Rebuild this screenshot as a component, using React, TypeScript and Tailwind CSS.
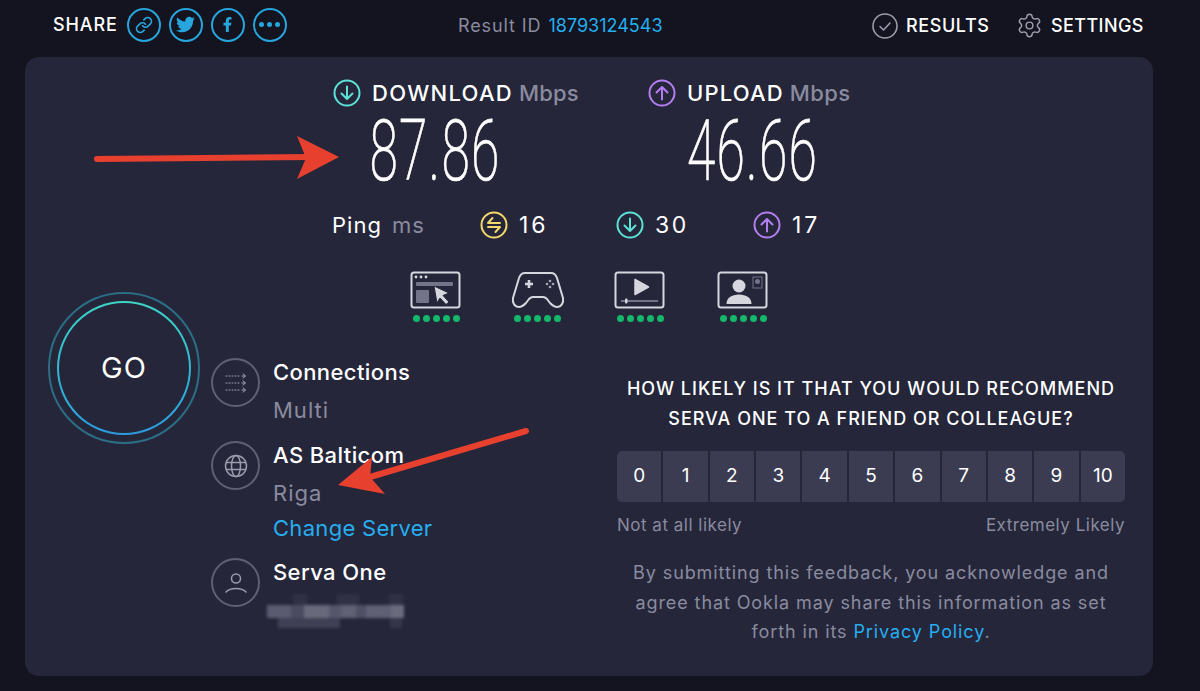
import React from 'react';
import { Link, Settings } from 'lucide-react';
import { FaTwitter, FaFacebookF } from 'react-icons/fa';

const scores = [0, 1, 2, 3, 4, 5, 6, 7, 8, 9, 10];

// pixelated block that hides the user's address
const redactTop = [
  { w: 24, c: 'bg-[#5a5b70]' },
  { w: 13, c: 'bg-[#4a4b60]' },
  { w: 25, c: 'bg-[#68697b]' },
  { w: 12, c: 'bg-[#55566a]' },
  { w: 15, c: 'bg-[#606175]' },
  { w: 10, c: 'bg-[#4f5065]' },
  { w: 25, c: 'bg-[#5f6074]' },
  { w: 13, c: 'bg-[#6a6b7d]' },
];

function ShareCircle({ children }: { children: React.ReactNode }) {
  return (
    <span className="w-[34px] h-[34px] rounded-full border-2 border-[#27a5dc] flex items-center justify-center text-[#27a5dc]">
      {children}
    </span>
  );
}

function ArrowBadge({ dir, color }: { dir: 'up' | 'down'; color: string }) {
  return (
    <svg width="28" height="28" viewBox="0 0 28 28" fill="none" stroke={color} strokeWidth="2" strokeLinecap="round" strokeLinejoin="round">
      <circle cx="14" cy="14" r="12.5" />
      {dir === 'down' ? <path d="M14 7.5v12.5M8.5 14.5l5.5 5.5 5.5-5.5" /> : <path d="M14 20.5V8M8.5 13.5L14 8l5.5 5.5" />}
    </svg>
  );
}

function PingBadge() {
  return (
    <svg width="28" height="28" viewBox="0 0 28 28" fill="none" stroke="#f3d86b" strokeWidth="2" strokeLinecap="round" strokeLinejoin="round">
      <circle cx="14" cy="14" r="12.5" />
      <path d="M20 12H8l4.500-5M8 16h12l-4.500 5" />
    </svg>
  );
}

function Dots() {
  return (
    <div className="flex gap-[3px] mt-[6px] justify-center">
      {[0, 1, 2, 3, 4].map((i) => (
        <span key={i} className="w-[7px] h-[7px] rounded-full bg-[#14b86a]" />
      ))}
    </div>
  );
}

function BrowseIcon() {
  return (
    <svg width="52" height="38" viewBox="0 0 52 38" fill="none">
      <rect x="1.5" y="1.5" width="48" height="35" rx="2.5" stroke="#d5d6de" strokeWidth="2" />
      <circle cx="6" cy="6" r="1.4" fill="#d5d6de" />
      <circle cx="11" cy="6" r="1.4" fill="#d5d6de" />
      <circle cx="16" cy="6" r="1.4" fill="#d5d6de" />
      <rect x="6" y="11" width="37" height="4" rx="1" fill="#73748a" />
      <rect x="6" y="19" width="13" height="13" rx="1" fill="#73748a" />
      <path d="M24 15l15 7-6 2.5 6 6.5-3 2.5-6-6.5-3 5z" fill="#d5d6de" stroke="#25263a" strokeWidth="1" />
    </svg>
  );
}

function GameIcon() {
  return (
    <svg width="54" height="38" viewBox="0 0 54 38" fill="none">
      <path d="M14 2h26c3 0 5 2 6 5l6 20c1 5-2 9-6 9-3 0-5-2-7-4l-3-4c-1-1-2-2-4-2H22c-2 0-3 1-4 2l-3 4c-2 2-4 4-7 4-4 0-7-4-6-9L8 7c1-3 3-5 6-5z" stroke="#d5d6de" strokeWidth="2" strokeLinejoin="round" />
      <path d="M18 9v8M14 13h8" stroke="#d5d6de" strokeWidth="2.6" />
      <circle cx="39" cy="10" r="1.3" fill="#a5a6b5" />
      <circle cx="39" cy="16" r="1.3" fill="#a5a6b5" />
      <circle cx="36" cy="13" r="1.3" fill="#a5a6b5" />
      <circle cx="42" cy="13" r="1.3" fill="#a5a6b5" />
    </svg>
  );
}

function VideoIcon() {
  return (
    <svg width="52" height="38" viewBox="0 0 52 38" fill="none">
      <rect x="1.5" y="1.5" width="48" height="35" rx="2.5" stroke="#d5d6de" strokeWidth="2" />
      <path d="M21 8.5l13.5 7.5L21 23.500z" fill="#d5d6de" stroke="#d5d6de" strokeWidth="1.500" strokeLinejoin="round" />
      <path d="M7 30h37" stroke="#73748a" strokeWidth="2" />
      <rect x="11" y="27.500" width="2.500" height="5" rx="1" fill="#d5d6de" />
    </svg>
  );
}

function MeetIcon() {
  return (
    <svg width="52" height="38" viewBox="0 0 52 38" fill="none">
      <rect x="1.5" y="1.5" width="48" height="35" rx="2.5" stroke="#d5d6de" strokeWidth="2" />
      <circle cx="22" cy="15" r="6.500" fill="#d5d6de" />
      <path d="M9.500 33c0-6 5-9.500 12.500-9.500S34.500 27 34.500 33z" fill="#d5d6de" />
      <rect x="36" y="6" width="9" height="11" stroke="#73748a" strokeWidth="1" />
      <circle cx="40.500" cy="10.500" r="2.500" fill="#73748a" />
    </svg>
  );
}

function FlowIcon() {
  return (
    <svg width="24" height="20" viewBox="0 0 24 20" fill="none" stroke="#a3a4b3" strokeWidth="1" strokeLinecap="round" strokeLinejoin="round">
      <path d="M2 3h15" strokeDasharray="1 2" />
      <path d="M2 10h15" strokeDasharray="1 2" />
      <path d="M2 17h15" strokeDasharray="1 2" />
      <path d="M18 3h3M19 .8L21.500 3 19 5.200M18 10h3M19 7.800L21.500 10 19 12.200M18 17h3M19 14.800L21.500 17 19 19.200" />
    </svg>
  );
}

function GlobeIcon() {
  return (
    <svg width="24" height="24" viewBox="0 0 24 24" fill="none" stroke="#9b9cac" strokeWidth="1.500">
      <circle cx="12" cy="12" r="10.500" />
      <ellipse cx="12" cy="12" rx="4.500" ry="10.500" />
      <path d="M2 8.500h20M2 15.500h20" />
    </svg>
  );
}

function UserIcon() {
  return (
    <svg width="24" height="24" viewBox="0 0 24 24" fill="none" stroke="#9b9cac" strokeWidth="1.500" strokeLinecap="round">
      <circle cx="12" cy="7.500" r="4.500" />
      <path d="M2 21c2.500-2.500 6-3.500 10-3.500s7.500 1 10 3.500" />
    </svg>
  );
}

function ServerRow({ icon, title, children }: { icon: React.ReactNode; title: string; children: React.ReactNode }) {
  return (
    <div className="flex gap-[13px] items-start">
      <div className="w-[49px] h-[49px] rounded-full border-2 border-[#5f6072] flex items-center justify-center shrink-0">{icon}</div>
      <div>
        <div className="text-[22px] leading-[28px] font-medium tracking-[0.4px] text-white">{title}</div>
        {children}
      </div>
    </div>
  );
}

export default function App() {
  return (
    <div className="w-[1200px] h-[691px] overflow-hidden bg-[#13141f] font-['Inter',sans-serif] text-white">
      <header className="h-[57px] flex items-center pl-[53px]">
        <div className="flex items-center gap-[8px] w-[405px] -mt-[8px]">
          <span className="text-[18px] font-medium mr-[1px] tracking-[0.9px]">SHARE</span>
          <ShareCircle><Link size={18} strokeWidth={2.2} /></ShareCircle>
          <ShareCircle><FaTwitter size={19} /></ShareCircle>
          <ShareCircle><FaFacebookF size={15} /></ShareCircle>
          <ShareCircle>
            <span className="flex gap-[3px]">
              <span className="w-[5px] h-[5px] rounded-full bg-[#27a5dc]" />
              <span className="w-[5px] h-[5px] rounded-full bg-[#27a5dc]" />
              <span className="w-[5px] h-[5px] rounded-full bg-[#27a5dc]" />
            </span>
          </ShareCircle>
        </div>
        <div className="text-[18px] -mt-[7px] tracking-[0.9px] text-[#8a8b9f] w-[414px]">
          Result ID <span className="ml-[1px] tracking-[0px] text-[#26aef0]">18793124543</span>
        </div>
        <div className="flex items-center -mt-[6px]">
          <svg width="26" height="26" viewBox="0 0 26 26" fill="none" stroke="#9b9cac" strokeWidth="1.600" strokeLinecap="round" strokeLinejoin="round">
            <circle cx="13" cy="13" r="12" />
            <path d="M8 13.500l3.500 3.500L18 10" />
          </svg>
          <span className="ml-[8px] w-[110px] text-[18px] font-medium tracking-[0.6px]">RESULTS</span>
          <Settings size={27} strokeWidth={1.3} className="text-[#9b9cac]" />
          <span className="ml-[8px] text-[18px] font-medium tracking-[0.4px]">SETTINGS</span>
        </div>
      </header>

      <main className="relative ml-[25px] w-[1128px] h-[619px] rounded-[14px] bg-[#25263a]">
        {/* annotation arrows */}
        <svg className="absolute left-0 top-0 pointer-events-none z-10" width="1128" height="619" viewBox="0 0 1128 619" fill="none">
          <path d="M72 102L285 100" stroke="#e8402f" strokeWidth="6" strokeLinecap="round" />
          <path d="M272 79L314 100 272 122 281 101z" fill="#e8402f" />
          <path d="M501 374L345 420" stroke="#e8402f" strokeWidth="6" strokeLinecap="round" />
          <path d="M347 400L313 428 360 437 345 420z" fill="#e8402f" />
        </svg>

        <div className="pt-[20px] pl-[308px] flex gap-[67px]">
          <div className="w-[248px]">
            <div className="flex items-center gap-[11px] text-[22px] leading-[32px] font-medium whitespace-nowrap">
              <ArrowBadge dir="down" color="#5be3d6" />
              <span><span className="tracking-[1.3px]">DOWNLOAD</span> <span className="tracking-[0.2px] text-[#8a8b9f]">Mbps</span></span>
            </div>
            <div className="h-[84px] -ml-[44px] flex justify-center items-center font-['Roboto',sans-serif] font-extralight text-[86px] leading-[84px] tracking-[2px] scale-x-[0.6] [-webkit-text-stroke:0.7px_#fff]">87.86</div>
          </div>
          <div className="w-[204px]">
            <div className="flex items-center gap-[11px] text-[22px] leading-[32px] font-medium whitespace-nowrap">
              <ArrowBadge dir="up" color="#b57ef0" />
              <span><span className="tracking-[1.2px]">UPLOAD</span> <span className="tracking-[0.4px] text-[#8a8b9f]">Mbps</span></span>
            </div>
            <div className="h-[84px] ml-[5px] flex justify-center items-center font-['Roboto',sans-serif] font-extralight text-[86px] leading-[84px] tracking-[2px] scale-x-[0.6] [-webkit-text-stroke:0.7px_#fff]">46.66</div>
          </div>
        </div>

        <div className="mt-[18px] ml-[307px] flex items-center text-[22px] leading-[28px] tracking-[1px]">
          <span className="w-[148px]">Ping <span className="ml-[3px] text-[#8a8b9f]">ms</span></span>
          <div className="w-[136px] flex items-center gap-[11px] tracking-[3px] text-[23px]"><PingBadge />16</div>
          <div className="w-[137px] flex items-center gap-[11px] tracking-[2.5px] text-[23px]"><ArrowBadge dir="down" color="#5be3d6" />30</div>
          <div className="flex items-center gap-[11px] tracking-[3px] text-[23px]"><ArrowBadge dir="up" color="#b57ef0" />17</div>
        </div>

        <div className="mt-[32px] ml-[385px] flex gap-[50px]">
          <div className="w-[52px]"><BrowseIcon /><Dots /></div>
          <div className="w-[52px] -ml-[1px]"><GameIcon /><Dots /></div>
          <div className="w-[52px] ml-[1px]"><VideoIcon /><Dots /></div>
          <div className="w-[52px] ml-[1px]"><MeetIcon /><Dots /></div>
        </div>

        <div className="flex -mt-[30px]">
          <div className="ml-[23px] w-[152px] h-[152px] rounded-full border-2 border-[#2b6f86] flex items-center justify-center shrink-0">
            <div className="w-[134px] h-[134px] rounded-full p-[2px] bg-gradient-to-b from-[#3fd3c4] to-[#2b9bdc]">
              <div className="w-full h-full rounded-full bg-[#25263a] flex items-center justify-center text-[29px] tracking-[1px]">GO</div>
            </div>
          </div>

          <div className="ml-[11px] mt-[66px] w-[395px]">
            <ServerRow icon={<FlowIcon />} title="Connections">
              <div className="mt-[10px] text-[22px] leading-[28px] tracking-[1px] text-[#8a8b9f]">Multi</div>
            </ServerRow>
            <div className="mt-[17px]">
              <ServerRow icon={<GlobeIcon />} title="AS Balticom">
                <div className="mt-[10px] text-[22px] leading-[28px] tracking-[1px] text-[#8a8b9f]">Riga</div>
                <div className="mt-[7px] text-[22px] leading-[28px] tracking-[0.3px] text-[#26aef0]">Change Server</div>
              </ServerRow>
            </div>
            <div className="mt-[16px]">
              <ServerRow icon={<UserIcon />} title="Serva One">
                <div className="mt-[8px] -ml-[6px] h-[36px] flex flex-col blur-[1.5px]">
                  <div className="h-[11px] flex ml-[26px] gap-[30px]">
                    <div className="w-[14px] bg-[#303145]" />
                    <div className="w-[22px] bg-[#303145]" />
                    <div className="w-[14px] bg-[#303145]" />
                  </div>
                  <div className="h-[13px] flex">
                    {redactTop.map((b, i) => (
                      <div key={i} className={b.c} style={{ width: b.w }} />
                    ))}
                  </div>
                  <div className="h-[10px] flex ml-[11px]">
                    <div className="w-[62px] bg-[#3f4055]" />
                    <div className="w-[50px]" />
                    <div className="w-[12px] bg-[#35364a]" />
                  </div>
                </div>
              </ServerRow>
            </div>
          </div>

          <div className="mt-[82px] w-[508px] ml-[11px]">
            <h2 className="text-center text-[18px] leading-[30px] font-medium tracking-[1px] whitespace-nowrap">
              HOW LIKELY IS IT THAT YOU WOULD RECOMMEND
              <br />
              SERVA ONE TO A FRIEND OR COLLEAGUE?
            </h2>
            <div className="mt-[17px] flex gap-[2px] rounded-[5px] overflow-hidden">
              {scores.map((n) => (
                <div key={n} className="flex-1 h-[51px] bg-[#3b3c52] flex items-center justify-center text-[19px]">{n}</div>
              ))}
            </div>
            <div className="mt-[11px] flex justify-between text-[17px] leading-[24px] tracking-[0.5px] text-[#8a8b9f]">
              <span>Not at all likely</span>
              <span>Extremely Likely</span>
            </div>
            <p className="mt-[21px] text-center text-[18px] leading-[29.500px] tracking-[0.9px] whitespace-nowrap text-[#8a8b9f]">
              By submitting this feedback, you acknowledge and
              <br />
              agree that Ookla may share this information as set
              <br />
              forth in its <span className="text-[#26aef0]">Privacy Policy</span>.
            </p>
          </div>
        </div>
      </main>
    </div>
  );
}
